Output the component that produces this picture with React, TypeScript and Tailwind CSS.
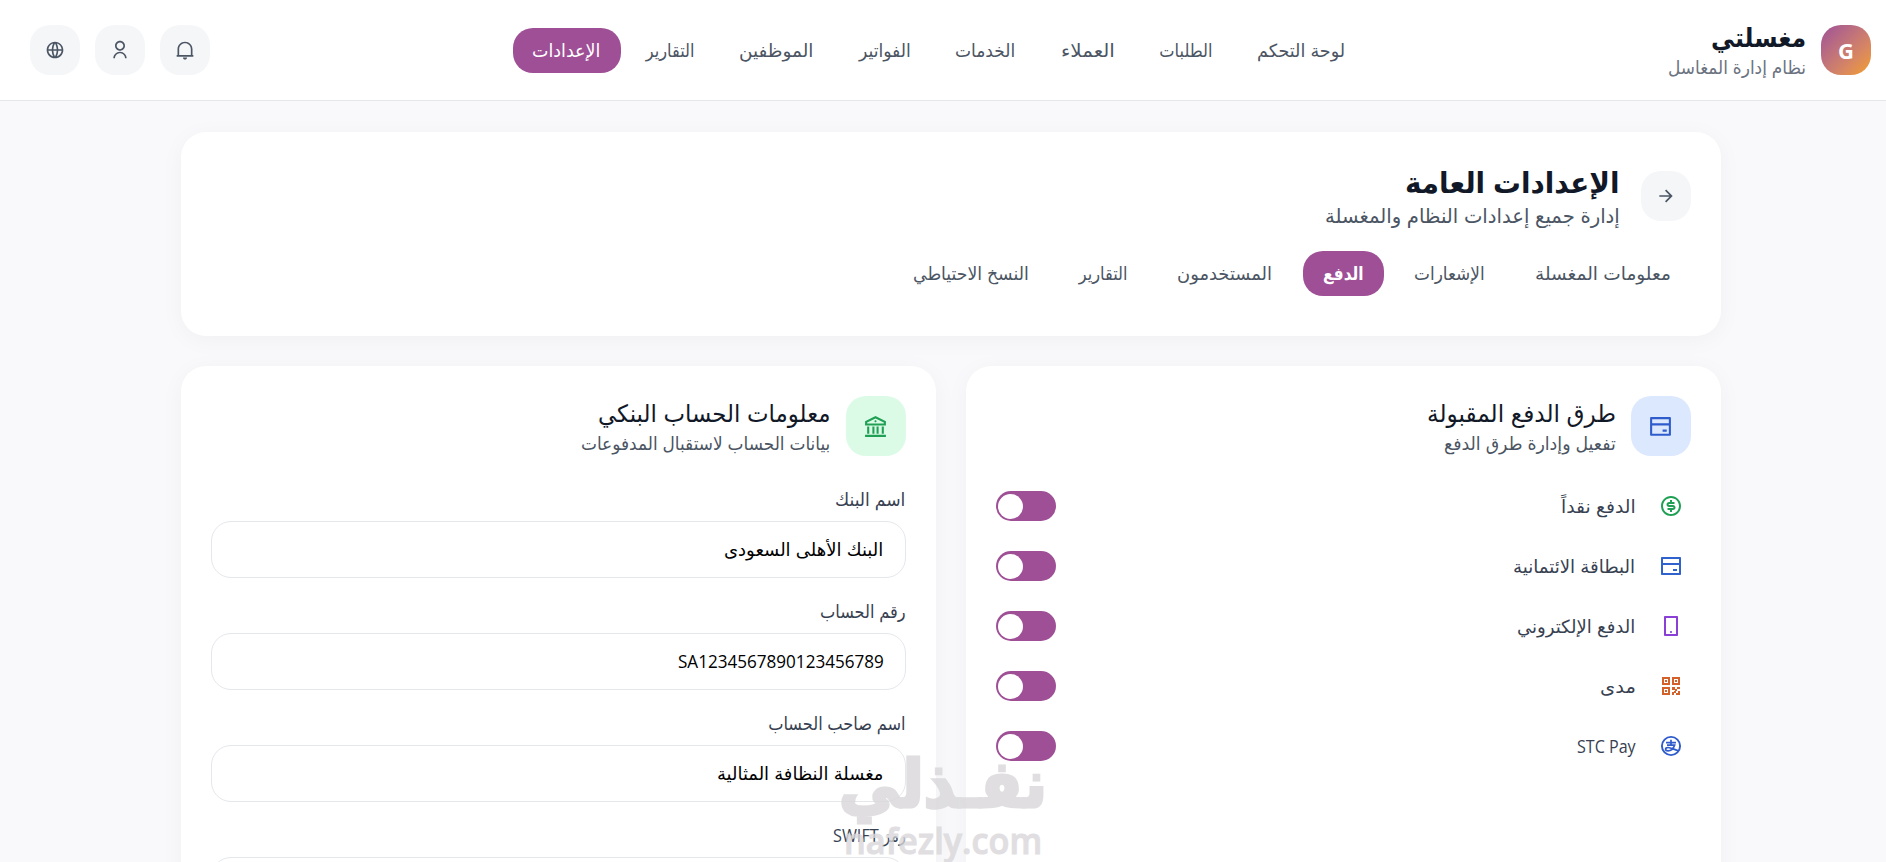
import { useLayoutEffect, useRef } from "react";
import type { ReactNode } from "react";
import type { IconType } from "react-icons";
import {
  RiArrowRightLine,
  RiBankCardLine,
  RiBankLine,
  RiGlobalLine,
  RiMoneyDollarCircleLine,
  RiNotification2Line,
  RiQrCodeLine,
  RiSmartphoneLine,
  RiUserLine,
} from "react-icons/ri";

const navItems = [
  { label: "لوحة التحكم", width: 88 },
  { label: "الطلبات", width: 53 },
  { label: "العملاء", width: 54 },
  { label: "الخدمات", width: 60 },
  { label: "الفواتير", width: 52 },
  { label: "الموظفين", width: 74 },
  { label: "التقارير", width: 49 },
  { label: "الإعدادات", width: 68, active: true },
];

const tabs = [
  { label: "معلومات المغسلة", width: 136 },
  { label: "الإشعارات", width: 71 },
  { label: "الدفع", width: 41, active: true },
  { label: "المستخدمون", width: 95 },
  { label: "التقارير", width: 49 },
  { label: "النسخ الاحتياطي", width: 116 },
];

const methods = [
  { icon: RiMoneyDollarCircleLine, label: "الدفع نقداً", width: 75, color: "text-[#1fa054]" },
  { icon: RiBankCardLine, label: "البطاقة الائتمانية", width: 122, color: "text-[#2f62cc]" },
  { icon: RiSmartphoneLine, label: "الدفع الإلكتروني", width: 118, color: "text-[#8a3fd6]" },
  { icon: RiQrCodeLine, label: "مدى", width: 36, color: "text-[#d4602a]" },
  { icon: StcIcon, label: "STC Pay", width: 59, color: "text-[#2f5ccc]" },
];

const fields = [
  { label: "اسم البنك", labelWidth: 70, value: "البنك الأهلى السعودى", width: 159 },
  { label: "رقم الحساب", labelWidth: 86, value: "SA1234567890123456789", width: 206 },
  { label: "اسم صاحب الحساب", labelWidth: 137, value: "مغسلة النظافة المثالية", width: 166 },
  { label: "رمز SWIFT", labelWidth: 73, value: "NCBKSAJE", width: 90 },
];

// Keeps a line of text at a fixed width whatever Arabic font is available
function Fit({ width, children }: { width: number; children: ReactNode }) {
  const ref = useRef<HTMLSpanElement>(null);

  useLayoutEffect(() => {
    const el = ref.current;
    if (el && el.offsetWidth) el.style.transform = `scaleX(${width / el.offsetWidth})`;
  }, [width]);

  return (
    <span className="flex justify-start whitespace-nowrap" style={{ width }}>
      <span ref={ref} className="block shrink-0 origin-right">
        {children}
      </span>
    </span>
  );
}

function StcIcon({ className }: { className?: string }) {
  return (
    <svg viewBox="0 0 24 24" fill="none" stroke="currentColor" strokeWidth="1.7" className={className}>
      <circle cx="12" cy="12" r="9.1" strokeWidth="1.9" />
      <path d="M7 8.600h10M12 5.800v5.200M8 11.200h7.600c-1.200 3.400-4 5.600-6.600 5.600-3.200 0-3.200-3.300 0-3.300 3 0 6.500 2.300 10.400 3.300" />
    </svg>
  );
}

function Header() {
  return (
    <header className="flex h-[101px] shrink-0 items-center justify-between border-b border-[#e5e7eb] bg-white pr-[15px] pl-[30px]">
      <div className="flex items-center gap-[15px]">
        <div className="flex size-[50px] items-center justify-center rounded-[20px] bg-linear-to-br from-[#9f4f96] to-[#f59e1b] text-[22px] font-bold text-white">
          G
        </div>
        <div className="w-[138px]">
          <h1 className="text-[26px] leading-[34px] font-bold text-[#111827]">
            <Fit width={95}>مغسلتي</Fit>
          </h1>
          <p className="text-[18px] leading-[26px] text-[#6b7280]">
            <Fit width={138}>نظام إدارة المغاسل</Fit>
          </p>
        </div>
      </div>

      <nav className="flex gap-[5px]">
        {navItems.map(({ label, width, active }) => (
          <a
            key={label}
            className={`flex h-[45px] items-center rounded-[20px] px-5 text-[18px] ${
              active ? "bg-[#9e4f96] text-white" : "text-[#4b5563]"
            }`}
          >
            <Fit width={width}>{label}</Fit>
          </a>
        ))}
      </nav>

      <div className="flex gap-[15px]">
        {[RiNotification2Line, RiUserLine, RiGlobalLine].map((Icon, i) => (
          <button
            key={i}
            className="flex size-[50px] items-center justify-center rounded-[20px] bg-[#f5f6f8] text-[#4b5563]"
          >
            <Icon className="size-5" />
          </button>
        ))}
      </div>
    </header>
  );
}

function SettingsTabs() {
  return (
    <section className="h-[204px] rounded-[25px] bg-white px-[30px] pt-[34px] shadow-[0_4px_25px_rgba(0,0,0,0.04)]">
      <div className="flex h-[75px] items-start gap-[21px]">
        <button className="mt-[5px] flex size-[50px] items-center justify-center rounded-[20px] bg-[#f5f6f8] text-[#4b5563]">
          <RiArrowRightLine className="size-5" />
        </button>
        <div>
          <h2 className="text-[29px] leading-[32px] font-bold text-[#111827]">
            <Fit width={215}>الإعدادات العامة</Fit>
          </h2>
          <p className="text-[20px] leading-[35px] text-[#4b5563]">
            <Fit width={295}>إدارة جميع إعدادات النظام والمغسلة</Fit>
          </p>
        </div>
      </div>
      <div className="mt-[10px] flex gap-[10px]">
        {tabs.map(({ label, width, active }) => (
          <button
            key={label}
            className={`flex h-[45px] items-center rounded-[20px] px-5 text-[18px] ${
              active ? "bg-[#9e4f96] font-semibold text-white" : "text-[#4b5563]"
            }`}
          >
            <Fit width={width}>{label}</Fit>
          </button>
        ))}
      </div>
    </section>
  );
}

type CardTitleProps = {
  icon: IconType;
  tile: string;
  title: string;
  titleWidth: number;
  subtitle: string;
  subtitleWidth: number;
};

function CardTitle({ icon: Icon, tile, title, titleWidth, subtitle, subtitleWidth }: CardTitleProps) {
  return (
    <div className="flex h-[60px] items-center gap-[15px]">
      <div className={`flex size-[60px] items-center justify-center rounded-[20px] ${tile}`}>
        <Icon className="size-[25px]" />
      </div>
      <div className="pt-[2px]">
        <h3 className="text-[24px] leading-[32px] text-[#111827]">
          <Fit width={titleWidth}>{title}</Fit>
        </h3>
        <p className="text-[18px] leading-[28px] text-[#4b5563]">
          <Fit width={subtitleWidth}>{subtitle}</Fit>
        </p>
      </div>
    </div>
  );
}

function PaymentMethods() {
  return (
    <section className="h-[600px] w-[755px] rounded-[25px] bg-white p-[30px] shadow-[0_4px_25px_rgba(0,0,0,0.04)]">
      <CardTitle
        icon={RiBankCardLine}
        tile="bg-[#dbe8fd] text-[#2f5ccc]"
        title="طرق الدفع المقبولة"
        titleWidth={189}
        subtitle="تفعيل وإدارة طرق الدفع"
        subtitleWidth={172}
      />
      <div className="mt-[20px]">
        {methods.map(({ icon: Icon, label, width, color }) => (
          <div key={label} className="flex h-[60px] items-center pr-[8px]">
            <Icon className={`size-6 ${color}`} />
            <span className="mr-[23px] text-[18px] text-[#374151]">
              <Fit width={width}>{label}</Fit>
            </span>
            <span className="mr-auto flex h-[30px] w-[60px] items-center justify-end rounded-full bg-[#9e4f96] pl-[2px]">
              <span className="size-[25px] rounded-full bg-white" />
            </span>
          </div>
        ))}
      </div>
    </section>
  );
}

function BankAccount() {
  return (
    <section className="h-[600px] w-[755px] rounded-[25px] bg-white p-[30px] shadow-[0_4px_25px_rgba(0,0,0,0.04)]">
      <CardTitle
        icon={RiBankLine}
        tile="bg-[#dcfbe7] text-[#1fa054]"
        title="معلومات الحساب البنكي"
        titleWidth={232}
        subtitle="بيانات الحساب لاستقبال المدفوعات"
        subtitleWidth={249}
      />
      <div className="mt-[28px] flex flex-col gap-[18px]">
        {fields.map(({ label, labelWidth, value, width }) => (
          <div key={label}>
            <label className="block h-[37px] text-[18px] leading-[30px] text-[#374151]">
              <Fit width={labelWidth}>{label}</Fit>
            </label>
            <div className="flex h-[57px] items-center rounded-[20px] border border-[#e5e7eb] px-[21px] text-[18px] text-black">
              <Fit width={width}>{value}</Fit>
            </div>
          </div>
        ))}
      </div>
    </section>
  );
}

function Watermark() {
  return (
    <div className="absolute top-[738px] left-[837px] flex h-[124px] w-[212px] flex-col items-center overflow-hidden text-[#d9d7da] opacity-80">
      <span className="h-[86px] text-[66px] leading-[86px] font-bold [-webkit-text-stroke:3px_#d9d7da]">
        <Fit width={208}>نفـذلي</Fit>
      </span>
      <span className="text-[36px] leading-[34px] font-semibold [-webkit-text-stroke:1px_#d9d7da]">
        <Fit width={198}>nafezly.com</Fit>
      </span>
    </div>
  );
}

export default function App() {
  return (
    <div
      dir="rtl"
      className="relative flex h-[862px] flex-col overflow-hidden bg-[#f9f9fb] font-['Open_Sans','DejaVu_Sans_Condensed','DejaVu_Sans',sans-serif]"
    >
      <Header />
      <main className="flex justify-center pt-[31px] pl-[15px]">
        <div className="flex w-[1540px] flex-col gap-[30px]">
          <SettingsTabs />
          <div className="flex justify-between">
            <PaymentMethods />
            <BankAccount />
          </div>
        </div>
      </main>
      <Watermark />
    </div>
  );
}
